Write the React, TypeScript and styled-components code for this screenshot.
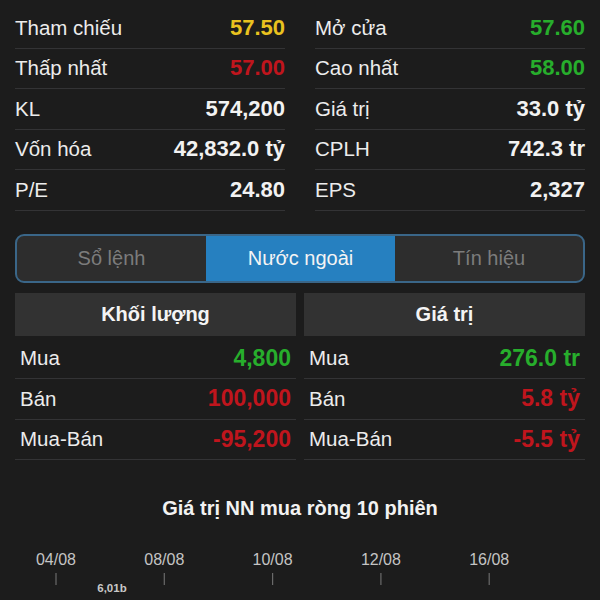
import React from "react";
import styled, { createGlobalStyle } from "styled-components";

const GlobalStyle = createGlobalStyle`
    html, body {
        margin: 0;
        padding: 0;
        background: #1c1c1c;
    }
    body {
        font-family: "Liberation Sans", Arial, sans-serif;
        color: #f2f2f2;
        width: 600px;
        height: 600px;
        overflow: hidden;
    }
`;

const COLORS: Record<string, string> = {
    white: "#f2f2f2",
    yellow: "#e9c21f",
    red: "#c0151d",
    green: "#27ae2c",
};

const Page = styled.div`
    padding: 8px 15px 0;
`;

const StatsGrid = styled.div`
    display: grid;
    grid-template-columns: 1fr 1fr;
    column-gap: 30px;
`;

const Column = styled.div<{ $offset?: number }>`
    display: flex;
    flex-direction: column;
    padding-top: ${(props) => props.$offset ?? 0}px;
`;

const StatRow = styled.div<{ $pad?: number }>`
    display: flex;
    align-items: center;
    justify-content: space-between;
    height: 40.5px;
    box-sizing: border-box;
    padding: 0 ${(props) => props.$pad ?? 0}px;
    border-bottom: 1px solid #333335;
`;

const Label = styled.span`
    font-size: 20.5px;
    color: #ececec;
`;

const Value = styled.span<{ $color: string; $size: number }>`
    font-size: ${(props) => props.$size}px;
    font-weight: 700;
    color: ${(props) => COLORS[props.$color]};
`;

const Tabs = styled.div`
    display: grid;
    grid-template-columns: 189px 189px 1fr;
    margin-top: 23px;
    height: 49px;
    box-sizing: border-box;
    border: 2px solid #3a6688;
    border-radius: 9px;
    overflow: hidden;
    background: #2d2d2d;
`;

const Tab = styled.div<{ $active?: boolean }>`
    display: flex;
    align-items: center;
    justify-content: center;
    font-size: 20px;
    color: ${(props) => (props.$active ? "#f4f4f4" : "#7c7c7c")};
    background: ${(props) => (props.$active ? "#2680c0" : "transparent")};
`;

const ForeignGrid = styled.div`
    display: grid;
    grid-template-columns: 281px 281px;
    column-gap: 8px;
    margin-top: 10px;
`;

const SubHeader = styled.div`
    height: 43px;
    display: flex;
    align-items: center;
    justify-content: center;
    background: #323232;
    font-size: 20px;
    font-weight: 700;
    color: #f4f4f4;
`;

const ChartTitle = styled.div`
    margin-top: 37px;
    text-align: center;
    font-size: 20px;
    font-weight: 700;
    color: #f2f2f2;
`;

const Axis = styled.svg`
    display: block;
    margin: 31px 0 0 -15px;
`;

type Stat = { label: string; value: string; color: string };

const leftStats: Stat[] = [
    { label: "Tham chiếu", value: "57.50", color: "yellow" },
    { label: "Thấp nhất", value: "57.00", color: "red" },
    { label: "KL", value: "574,200", color: "white" },
    { label: "Vốn hóa", value: "42,832.0 tỷ", color: "white" },
    { label: "P/E", value: "24.80", color: "white" },
];

const rightStats: Stat[] = [
    { label: "Mở cửa", value: "57.60", color: "green" },
    { label: "Cao nhất", value: "58.00", color: "green" },
    { label: "Giá trị", value: "33.0 tỷ", color: "white" },
    { label: "CPLH", value: "742.3 tr", color: "white" },
    { label: "EPS", value: "2,327", color: "white" },
];

const volume: Stat[] = [
    { label: "Mua", value: "4,800", color: "green" },
    { label: "Bán", value: "100,000", color: "red" },
    { label: "Mua-Bán", value: "-95,200", color: "red" },
];

const amount: Stat[] = [
    { label: "Mua", value: "276.0 tr", color: "green" },
    { label: "Bán", value: "5.8 tỷ", color: "red" },
    { label: "Mua-Bán", value: "-5.5 tỷ", color: "red" },
];

const dates = ["04/08", "08/08", "10/08", "12/08", "16/08"];

const StatList: React.FC<{ items: Stat[]; pad?: number; offset?: number; size?: number }> = ({
    items,
    pad,
    offset,
    size = 22,
}) => (
    <Column $offset={offset}>
        {items.map((s) => (
            <StatRow key={s.label} $pad={pad}>
                <Label>{s.label}</Label>
                <Value $color={s.color} $size={size}>
                    {s.value}
                </Value>
            </StatRow>
        ))}
    </Column>
);

export default function App() {
    return (
        <>
            <GlobalStyle />
            <Page>
                <StatsGrid>
                    <StatList items={leftStats} />
                    <StatList items={rightStats} />
                </StatsGrid>

                <Tabs>
                    <Tab>Sổ lệnh</Tab>
                    <Tab $active>Nước ngoài</Tab>
                    <Tab>Tín hiệu</Tab>
                </Tabs>

                <ForeignGrid>
                    <Column>
                        <SubHeader>Khối lượng</SubHeader>
                        <StatList items={volume} pad={5} offset={3} size={23} />
                    </Column>
                    <Column>
                        <SubHeader>Giá trị</SubHeader>
                        <StatList items={amount} pad={5} offset={3} size={23} />
                    </Column>
                </ForeignGrid>

                <ChartTitle>Giá trị NN mua ròng 10 phiên</ChartTitle>

                <Axis width="600" height="60" viewBox="0 0 600 60">
                    {dates.map((d, i) => {
                        const x = 56 + i * 108.3;
                        return (
                            <g key={d}>
                                <text
                                    x={x}
                                    y={14}
                                    textAnchor="middle"
                                    fill="#c4c4c4"
                                    fontSize="16"
                                    fontFamily="Liberation Sans, Arial, sans-serif"
                                >
                                    {d}
                                </text>
                                <line x1={x} y1={22} x2={x} y2={34} stroke="#6a6a6a" strokeWidth="1.2" />
                            </g>
                        );
                    })}
                    <text
                        x={112}
                        y={41}
                        textAnchor="middle"
                        fill="#c8c8c8"
                        fontSize="11.5"
                        fontWeight="700"
                        fontFamily="Liberation Sans, Arial, sans-serif"
                    >
                        6,01b
                    </text>
                </Axis>
            </Page>
        </>
    );
}
